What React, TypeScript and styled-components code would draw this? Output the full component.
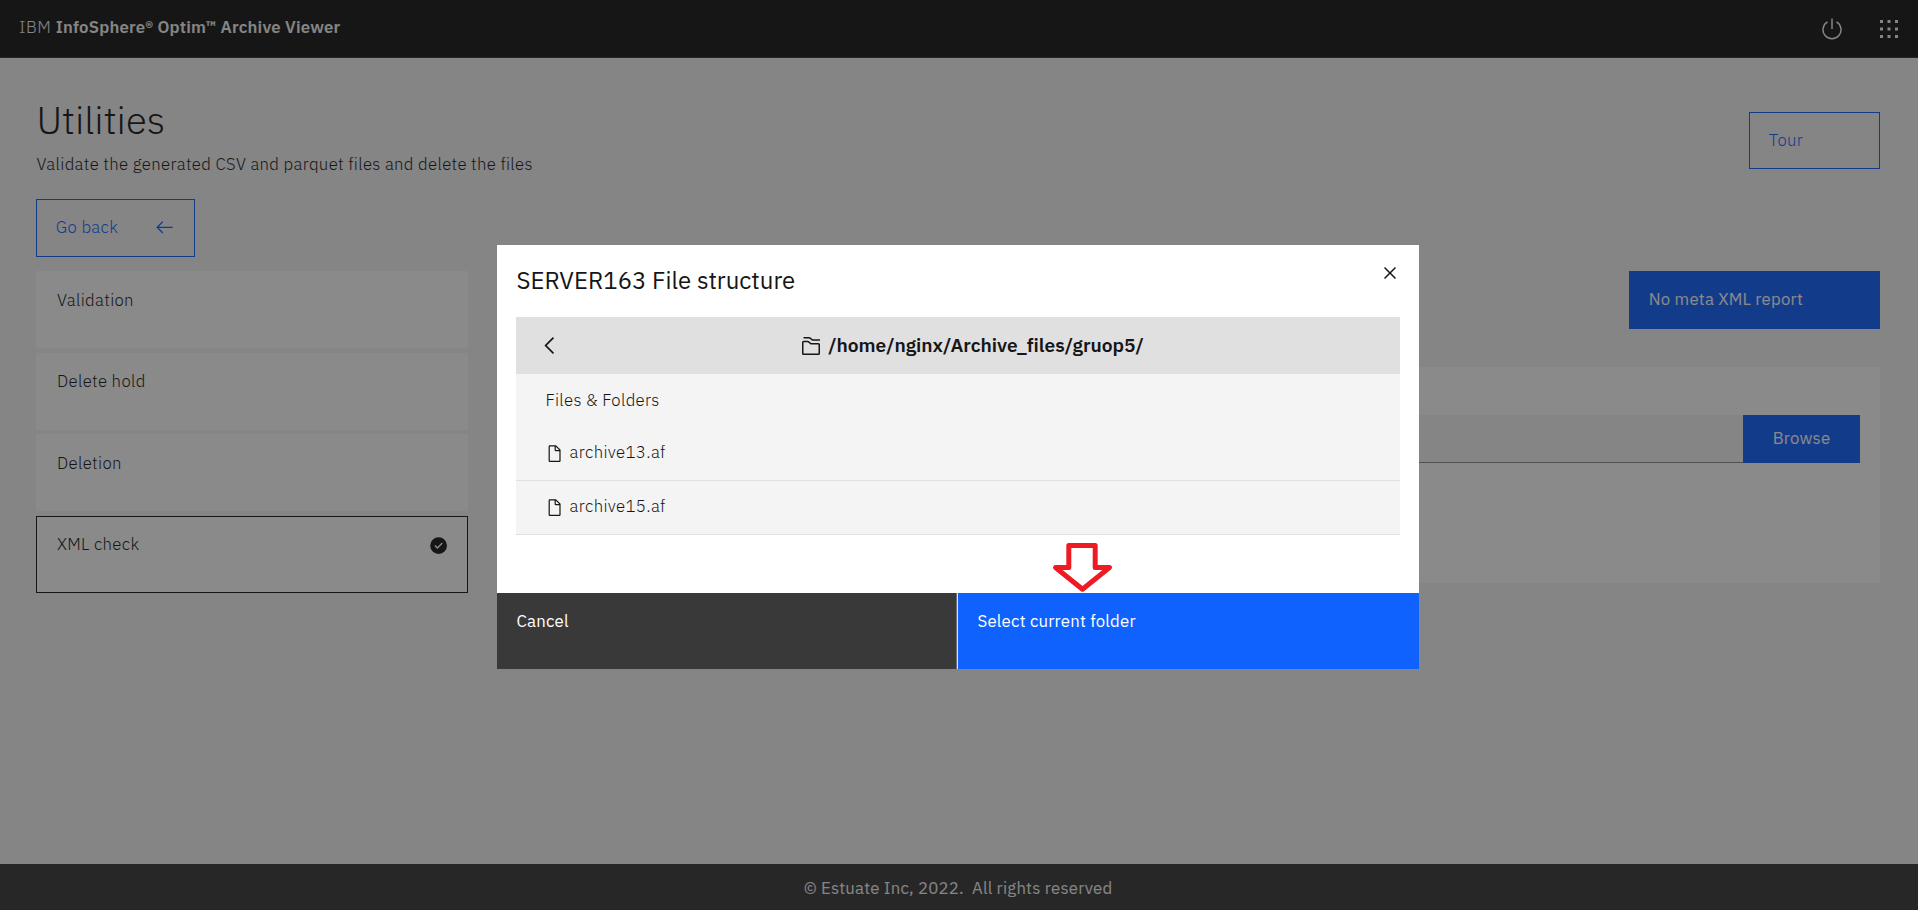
import React from "react";
import styled, { createGlobalStyle, css } from "styled-components";

const GlobalStyle = createGlobalStyle`
  *, *::before, *::after { box-sizing: border-box; }
  html, body { margin: 0; padding: 0; }
  body {
    font-family: "IBM Plex Sans", Roboto, "Noto Sans", sans-serif;
    font-size: 16.8px;
    line-height: 24px;
    letter-spacing: 0.192px;
    color: #161616;
    background: #f4f4f4;
    overflow: hidden;
  }
  svg { display: block; flex: none; }
`;

const lightText = css`
  font-weight: 300;
  letter-spacing: 0.31px;
`;

/* ---------- Page shell ---------- */

const Page = styled.div`
  display: flex;
  flex-direction: column;
  height: 100vh;
`;

const Header = styled.header`
  display: flex;
  justify-content: space-between;
  height: 58px;
  padding: 0 17px 0 19px;
  background: #161616;
  border-bottom: 1px solid #393939;
  color: #f4f4f4;
`;

const Brand = styled.div`
  padding-top: 14.7px;
  font-weight: 600;
  letter-spacing: 0.192px;
  white-space: pre;
`;

const BrandPrefix = styled.span`
  font-weight: 300;
  letter-spacing: 0.5px;
`;

const HeaderActions = styled.div`
  display: flex;
  align-items: center;
  gap: 33px;
`;

const Main = styled.main`
  flex: 1;
  padding: 0 38px 0 36px;
`;

const Intro = styled.div`
  display: flex;
  justify-content: space-between;
  align-items: flex-start;
  height: 141px;
`;

const Heading = styled.h1`
  margin: 37.6px 0 8px 0.4px;
  font-size: 38.4px;
  line-height: 48px;
  font-weight: 300;
  letter-spacing: 0;
`;

const Subtitle = styled.p`
  margin: 0 0 0 0.6px;
  ${lightText}
`;

const OutlineButton = styled.button<{ $width: number; $height: number; $top?: number }>`
  display: flex;
  justify-content: space-between;
  align-items: flex-start;
  width: ${(p) => p.$width}px;
  height: ${(p) => p.$height}px;
  margin: ${(p) => p.$top ?? 0}px 0 0;
  padding: 14.7px 19px 0 18.8px;
  border: 1px solid #0f62fe;
  background: transparent;
  color: #0f62fe;
  font: inherit;
  ${lightText}
`;

const SolidButton = styled.button<{ $width: number; $height: number; $center?: boolean }>`
  display: flex;
  align-items: flex-start;
  justify-content: ${(p) => (p.$center ? "center" : "flex-start")};
  width: ${(p) => p.$width}px;
  height: ${(p) => p.$height}px;
  margin: 0;
  padding: ${(p) => (p.$center ? "10.7px 0 0" : "15.7px 19.8px 0")};
  border: 0;
  background: #0f62fe;
  color: #ffffff;
  font: inherit;
  letter-spacing: inherit;
`;

const Columns = styled.div`
  display: flex;
  gap: 36px;
  margin-top: 14.2px;
`;

const TileList = styled.div`
  display: flex;
  flex-direction: column;
  gap: 4.8px;
  width: 432px;
`;

const Tile = styled.div<{ $selected?: boolean }>`
  display: flex;
  justify-content: space-between;
  align-items: flex-start;
  height: 76.8px;
  padding: 15.45px 19px 0 20px;
  border: 1px solid ${(p) => (p.$selected ? "#161616" : "#ffffff")};
  background: #ffffff;
  ${lightText}
`;

const Content = styled.section`
  display: flex;
  flex-direction: column;
  align-items: flex-end;
  gap: 38px;
  flex: 1;
`;

const Panel = styled.div`
  align-self: stretch;
  display: flex;
  align-items: flex-start;
  height: 216px;
  padding: 48px 20px 0;
  background: #ffffff;
`;

const PathInput = styled.div`
  flex: 1;
  height: 48px;
  background: #f4f4f4;
  border-bottom: 1px solid #8d8d8d;
`;

const Footer = styled.footer`
  display: flex;
  align-items: center;
  justify-content: center;
  height: 46px;
  padding: 1.6px 2px 0 0;
  background: #393939;
  color: #f4f4f4;
  white-space: pre;
`;

/* ---------- Modal ---------- */

const Overlay = styled.div`
  position: fixed;
  inset: 0;
  display: flex;
  align-items: flex-start;
  justify-content: center;
  padding: 245px 2px 0 0;
  background: rgba(22, 22, 22, 0.5);
`;

const Dialog = styled.div`
  position: relative;
  width: 922px;
  height: 424px;
  display: flex;
  flex-direction: column;
  background: #ffffff;
`;

const DialogHeader = styled.div`
  display: flex;
  justify-content: space-between;
  height: 72px;
  padding: 0 17px 0 19.6px;
`;

const DialogTitle = styled.h2`
  margin: 20px 0 0;
  font-size: 24px;
  line-height: 31px;
  font-weight: 400;
  letter-spacing: 0;
`;

const CloseButton = styled.span`
  padding-top: 16px;
`;

const DialogBody = styled.div`
  flex: 1;
  padding: 0 19px;
`;

const PathBar = styled.div`
  display: flex;
  align-items: center;
  height: 57px;
  background: #e0e0e0;
`;

const BackButton = styled.span`
  width: 57px;
  padding-left: 20.3px;
`;

const CurrentPath = styled.div`
  flex: 1;
  display: flex;
  align-items: flex-start;
  justify-content: center;
  gap: 5px;
  padding-right: 30px;
  font-size: 19.2px;
  line-height: 22px;
  font-weight: 600;
  letter-spacing: -0.03px;
`;

const FileList = styled.div`
  background: #f4f4f4;
  ${lightText}
`;

const ListHeading = styled.div`
  height: 53px;
  padding: 13.7px 29.4px 0;
`;

const FileRow = styled.div`
  display: flex;
  align-items: flex-start;
  gap: 5.4px;
  height: 54px;
  padding: 12.7px 29px 0;
  border-bottom: 1px solid #e0e0e0;

  svg { margin-top: 4px; }
`;

const DialogFooter = styled.div`
  display: flex;
  height: 76px;
`;

const DialogAction = styled.button<{ $primary?: boolean }>`
  display: flex;
  align-items: flex-start;
  width: ${(p) => (p.$primary ? 462 : 460)}px;
  margin: 0;
  padding: 15.7px 19.5px 0;
  border: 0;
  ${(p) =>
    p.$primary
      ? css`border-left: 1px solid #e0e0e0; background: #0f62fe;`
      : css`border-right: 1px solid #6f6f6f; background: #393939;`}
  color: #ffffff;
  font: inherit;
  letter-spacing: inherit;
`;

const Pointer = styled.svg`
  position: absolute;
  left: 553px;
  top: 293px;
`;

/* ---------- Icons ---------- */

const ICONS = {
  power: "M22.5,5.74l-1,1.73a11,11,0,1,1-11,0l-1-1.73a13,13,0,1,0,13,0Z M15 2H17V16H15z",
  switcher:
    "M14 4H18V8H14z M4 4H8V8H4z M24 4H28V8H24z M14 14H18V18H14z M4 14H8V18H4z M24 14H28V18H24z M14 24H18V28H14z M4 24H8V28H4z M24 24H28V28H24z",
  arrowLeft: "M13 25.5 14.4 24.1 7.3 17 29 17 29 15 7.3 15 14.4 7.9 13 6.5 3.5 16z",
  checkFilled:
    "M16 2A14 14 0 1 0 30 16 14 14 0 0 0 16 2ZM14 21.59l-5-5L10.59 15 14 18.41 21.41 11 23 12.59Z",
  close:
    "M24 9.4L22.6 8 16 14.6 9.4 8 8 9.4 14.6 16 8 22.6 9.4 24 16 17.4 22.6 24 24 22.6 17.4 16z",
  chevronLeft: "M10 16L20 6 21.4 7.4 12.8 16 21.4 24.6 20 26z",
  folders:
    "M26 28H6a2 2 0 0 1-2-2V11a2 2 0 0 1 2-2h5.67a2 2 0 0 1 1.2.4L16.29 12H26a2 2 0 0 1 2 2V26A2 2 0 0 1 26 28ZM11.67 11H6V26H26V14H15.62Z M28 9H17.65l-4-3H6V4h7.65a2 2 0 0 1 1.2.4L18.35 7H28Z",
  document:
    "M25.7 9.3l-7-7A.9.9 0 0 0 18 2H8A2 2 0 0 0 6 4V28a2 2 0 0 0 2 2H24a2 2 0 0 0 2-2V10A.9.9 0 0 0 25.7 9.3ZM18 4.4 23.6 10H18ZM24 28H8V4h8v6a2 2 0 0 0 2 2h6Z",
};

function Icon({ name, size }: { name: keyof typeof ICONS; size: number }) {
  return (
    <svg width={size} height={size} viewBox="0 0 32 32" fill="currentColor" fillRule="evenodd" aria-hidden="true">
      <path d={ICONS[name]} />
    </svg>
  );
}

const BackArrow = styled.span`
  padding-top: 2.7px;
`;

const TileMark = styled.span`
  padding-top: 3.4px;
`;

const UTILITIES = ["Validation", "Delete hold", "Deletion", "XML check"];
const FILES = ["archive13.af", "archive15.af"];
const SELECTED = "XML check";

export default function App() {
  return (
    <>
      <GlobalStyle />
      <Page>
        <Header>
          <Brand>
            <BrandPrefix>IBM </BrandPrefix>InfoSphere® Optim™ Archive Viewer
          </Brand>
          <HeaderActions>
            <Icon name="power" size={24} />
            <Icon name="switcher" size={24} />
          </HeaderActions>
        </Header>

        <Main>
          <Intro>
            <div>
              <Heading>Utilities</Heading>
              <Subtitle>Validate the generated CSV and parquet files and delete the files</Subtitle>
            </div>
            <OutlineButton $width={131} $height={57} $top={54}>
              Tour
            </OutlineButton>
          </Intro>
          <OutlineButton $width={159} $height={58}>
            Go back
            <BackArrow>
              <Icon name="arrowLeft" size={20.6} />
            </BackArrow>
          </OutlineButton>

          <Columns>
            <TileList>
              {UTILITIES.map((name) => (
                <Tile key={name} $selected={name === SELECTED}>
                  {name}
                  {name === SELECTED && (
                    <TileMark>
                      <Icon name="checkFilled" size={19.2} />
                    </TileMark>
                  )}
                </Tile>
              ))}
            </TileList>
            <Content>
              <SolidButton $width={251} $height={58}>
                No meta XML report
              </SolidButton>
              <Panel>
                <PathInput />
                <SolidButton $width={117} $height={48} $center>
                  Browse
                </SolidButton>
              </Panel>
            </Content>
          </Columns>
        </Main>

        <Footer>{"© Estuate Inc, 2022.  All rights reserved"}</Footer>
      </Page>

      <Overlay>
        <Dialog role="dialog" aria-modal="true">
          <DialogHeader>
            <DialogTitle>SERVER163 File structure</DialogTitle>
            <CloseButton>
              <Icon name="close" size={24} />
            </CloseButton>
          </DialogHeader>
          <DialogBody>
            <PathBar>
              <BackButton>
                <Icon name="chevronLeft" size={27} />
              </BackButton>
              <CurrentPath>
                <Icon name="folders" size={24} />
                /home/nginx/Archive_files/gruop5/
              </CurrentPath>
            </PathBar>
            <FileList>
              <ListHeading>Files &amp; Folders</ListHeading>
              {FILES.map((file) => (
                <FileRow key={file}>
                  <Icon name="document" size={19.2} />
                  {file}
                </FileRow>
              ))}
            </FileList>
          </DialogBody>
          <DialogFooter>
            <DialogAction>Cancel</DialogAction>
            <DialogAction $primary>Select current folder</DialogAction>
          </DialogFooter>
          <Pointer width="66" height="56" viewBox="0 0 66 56" fill="none" aria-hidden="true">
            <path
              d="M18.8 7.5H45.2V29.5H59.5L32.5 51.2L5.5 29.5H18.8Z"
              stroke="#ed1c24"
              strokeWidth="5"
              strokeLinejoin="round"
            />
          </Pointer>
        </Dialog>
      </Overlay>
    </>
  );
}
